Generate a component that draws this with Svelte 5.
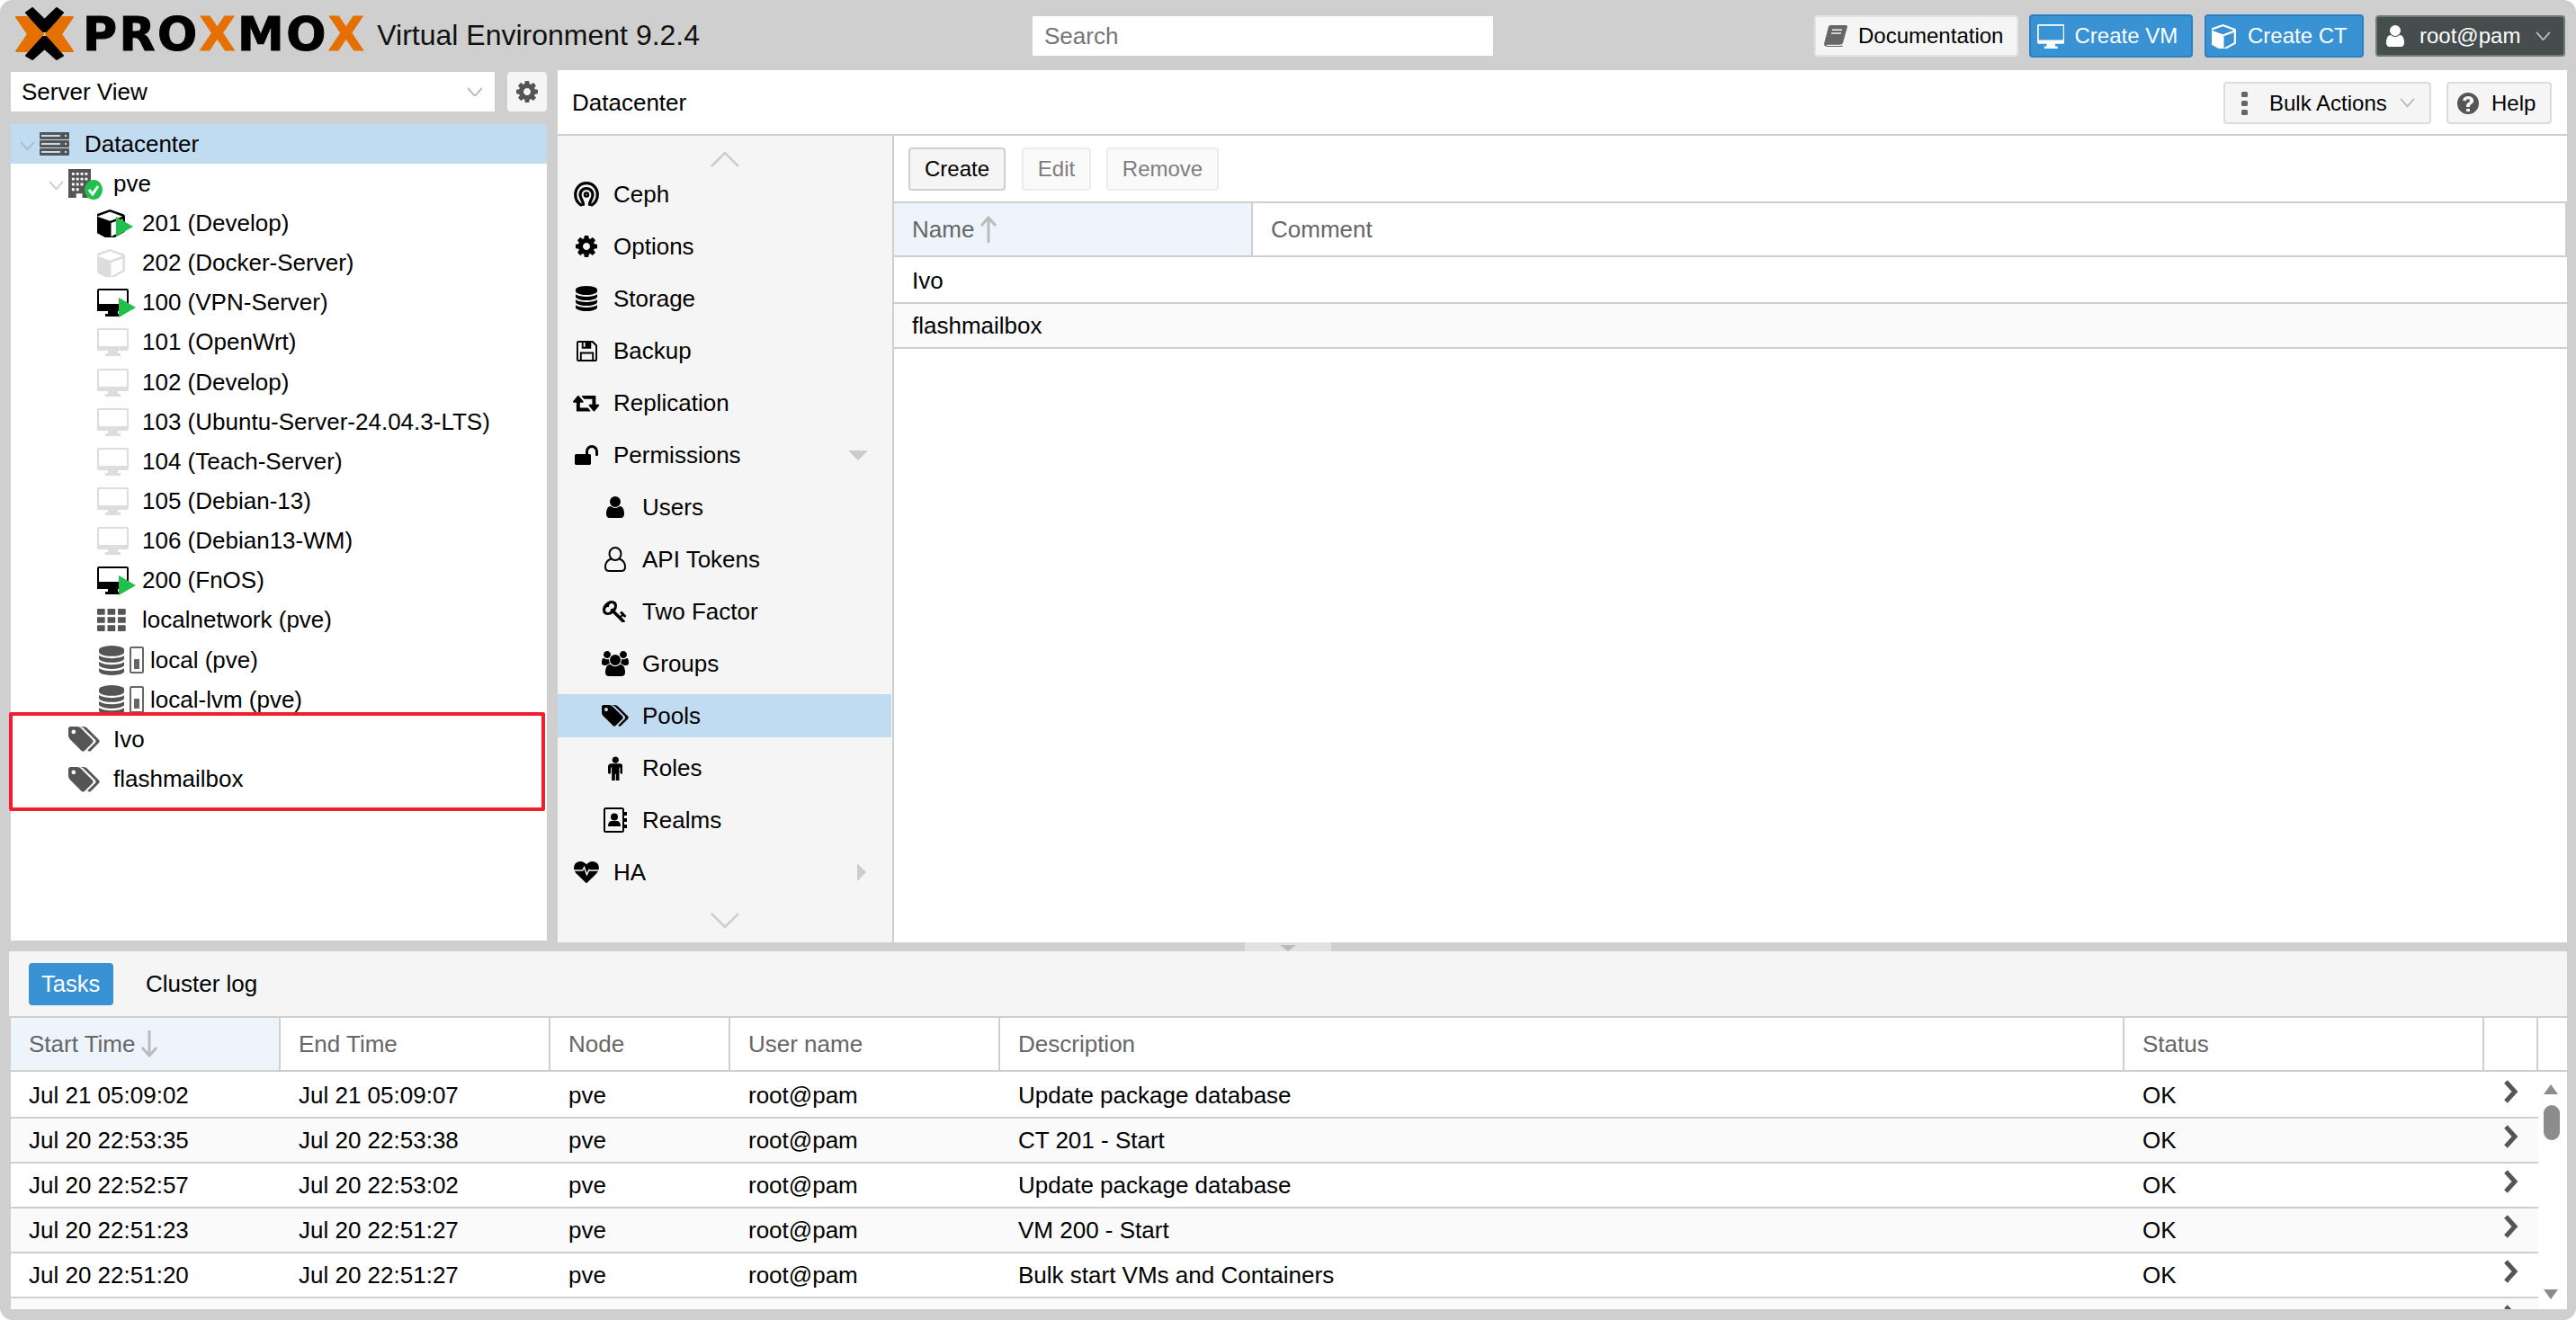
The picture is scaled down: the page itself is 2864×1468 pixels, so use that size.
<script>
  // FontAwesome-like glyphs, [viewBox, path]
  const ICONS = {
    cog: ['128 128 1536 1536', 'M1152 896q0-106-75-181t-181-75-181 75-75 181 75 181 181 75 181-75 75-181zm512-109v222q0 12-8 23t-20 13l-185 28q-19 54-39 91 35 50 107 138 10 12 10 25t-9 23q-27 37-99 108t-94 71q-12 0-26-9l-138-108q-44 23-91 38-16 136-29 186-7 28-36 28h-222q-14 0-24.5-8.5t-11.5-21.5l-28-184q-49-16-90-37l-141 107q-10 9-25 9-14 0-25-11-126-114-165-168-7-10-7-23 0-12 8-23 15-21 51-66.5t54-70.5q-27-50-41-99l-183-27q-13-2-21-12.5t-8-23.5v-222q0-12 8-23t19-13l186-28q14-46 39-92-40-57-107-138-10-12-10-24 0-10 9-23 26-36 98.5-107.5t94.5-71.5q13 0 26 10l138 107q44-23 91-38 16-136 29-186 7-28 36-28h222q14 0 24.5 8.5t11.5 21.5l28 184q49 16 90 37l142-107q9-9 24-9 13 0 25 10 129 119 165 170 7 8 7 22 0 12-8 23-15 21-51 66.5t-54 70.5q26 50 41 98l183 28q13 2 21 12.5t8 23.5z'],
    database: ['128 0 1536 1792', 'M896 768q237 0 443-43t325-127v170q0 69-103 128t-280 93.5-385 34.5-385-34.5-280-93.5-103-128v-170q119 84 325 127t443 43zm0 768q237 0 443-43t325-127v170q0 69-103 128t-280 93.5-385 34.5-385-34.5-280-93.5-103-128v-170q119 84 325 127t443 43zm0-384q237 0 443-43t325-127v170q0 69-103 128t-280 93.5-385 34.5-385-34.5-280-93.5-103-128v-170q119 84 325 127t443 43zm0-1152q208 0 385 34.5t280 93.5 103 128v128q0 69-103 128t-280 93.5-385 34.5-385-34.5-280-93.5-103-128v-128q0-69 103-128t280-93.5 385-34.5z'],
    user: ['256 128 1280 1536', 'M1536 1399q0 109-62.500 187t-150.500 78h-854q-88 0-150.500-78t-62.500-187q0-85 8.500-160.500t31.500-152 58.500-131 94-89 134.500-34.500q131 128 313 128t313-128q76 0 134.500 34.500t94 89 58.500 131 31.500 152 8.500 160.500zm-256-887q0 159-112.500 271.500t-271.500 112.500-271.500-112.500-112.500-271.500 112.500-271.500 271.500-112.500 271.500 112.500 112.500 271.500z'],
    tags: ['0 128 1984 1536', 'M448 448q0-53-37.500-90.500t-90.500-37.500-90.500 37.500-37.500 90.500 37.500 90.500 90.500 37.500 90.500-37.500 37.500-90.500zm1067 576q0 53-37 90l-491 492q-39 37-91 37-53 0-90-37l-715-716q-38-37-64.500-101t-26.500-117v-416q0-52 38-90t90-38h416q53 0 117 26.500t102 64.500l715 714q37 39 37 91zm384 0q0 53-37 90l-491 492q-39 37-91 37-36 0-59-14t-53-45l470-470q37-37 37-90 0-52-37-91l-715-714q-38-38-102-64.500t-117-26.500h224q53 0 117 26.500t102 64.500l715 714q37 39 37 91z'],
    unlock: ['0 128 1664 1408', 'M1664 576v256q0 26-19 45t-45 19h-64q-26 0-45-19t-19-45v-256q0-106-75-181t-181-75-181 75-75 181v192h96q40 0 68 28t28 68v576q0 40-28 68t-68 28h-960q-40 0-68-28t-28-68v-576q0-40 28-68t68-28h672v-192q0-185 131.500-316.500t316.500-131.500 316.500 131.500 131.500 316.500z'],
    retweet: ['0 256 1920 1280', 'M1280 1504q0 13-9.500 22.500t-22.500 9.500h-960q-8 0-13.500-2t-9-7-5.500-8-3-11.500-1-11.500v-600h-192q-26 0-45-19t-19-45q0-24 15-41l320-384q19-22 49-22t49 22l320 384q15 17 15 41 0 26-19 45t-45 19h-192v384h576q16 0 25 11l160 192q7 10 7 21zm640-416q0 24-15 41l-320 384q-20 23-49 23t-49-23l-320-384q-15-17-15-41 0-26 19-45t45-19h192v-384h-576q-16 0-25-12l-160-192q-7-9-7-20 0-13 9.500-22.500t22.500-9.500h960q8 0 13.500 2t9 7 5.500 8 3 11.500 1 11.500v600h192q26 0 45 19t19 45z'],
    key: ['0 128 1792 1536', 'M832 512q0-80-56-136t-136-56-136 56-56 136q0 42 19 83-41-19-83-19-80 0-136 56t-56 136 56 136 136 56 136-56 56-136q0-42-19-83 41 19 83 19 80 0 136-56t56-136zm851 704q0 17-49 66t-66 49q-9 0-28.500-16t-36.500-33-38.500-40-24.500-26l-96 96 220 220q28 28 28 68 0 42-39 81t-81 39q-40 0-68-28l-671-671q-176 131-365 131-163 0-265.500-102.500t-102.500-265.500q0-160 95-313t248-248 313-95q163 0 265.500 102.500t102.500 265.500q0 189-131 365l355 355 96-96q-3-3-26-24.500t-40-38.500-33-36.500-16-28.500q0-17 49-66t66-49q13 0 23 10 6 6 46 44.500t82 79.500 86.500 86 73 78 28.500 41z'],
    users: ['0 0 1920 1792', 'M593 896q-162 5-265 128h-134q-82 0-138-40.500t-56-118.500q0-353 124-353 6 0 43.500 21t97.500 42.500 119 21.500q67 0 133-23-5 37-5 66 0 139 81 256zm1071 637q0 120-73 189.500t-194 69.500h-874q-121 0-194-69.500t-73-189.500q0-53 3.500-103.500t14-109 26.500-108.500 43-97.500 62-81 85.500-53.500 111.500-20q10 0 43 21.500t73 48 107 48 135 21.500 135-21.500 107-48 73-48 43-21.500q61 0 111.500 20t85.500 53.500 62 81 43 97.500 26.500 108.500 14 109 3.500 103.500zm-1024-1277q0 106-75 181t-181 75-181-75-75-181 75-181 181-75 181 75 75 181zm704 384q0 159-112.500 271.500t-271.500 112.500-271.500-112.500-112.500-271.500 112.500-271.500 271.500-112.500 271.500 112.500 112.500 271.500zm576 225q0 78-56 118.500t-138 40.500h-134q-103-123-265-128 81-117 81-256 0-29-5-66 66 23 133 23 59 0 119-21.500t97.500-42.500 43.500-21q124 0 124 353zm-128-609q0 106-75 181t-181 75-181-75-75-181 75-181 181-75 181 75 75 181z'],
    male: ['0 128 1024 1664', 'M1024 832v416q0 40-28 68t-68 28-68-28-28-68v-352h-64v912q0 46-33 79t-79 33-79-33-33-79v-464h-64v464q0 46-33 79t-79 33-79-33-33-79v-912h-64v352q0 40-28 68t-68 28-68-28-28-68v-416q0-80 56-136t136-56h640q80 0 136 56t56 136zm-288-448q0 93-65.500 158.500t-158.500 65.500-158.500-65.500-65.500-158.500 65.500-158.500 158.500-65.500 158.500 65.500 65.500 158.500z'],
    heart: ['0 128 1792 1536', 'M896 1664q-26 0-44-18l-624-602q-10-8-27.500-26t-55.500-65.500-68-97.500-53.500-121-23.500-138q0-220 127-344t351-124q62 0 126.500 21.500t120 58 95.500 68.500 76 68q36-36 76-68t95.500-68.500 120-58 126.500-21.500q224 0 351 124t127 344q0 221-229 450l-623 600q-18 18-44 18z'],
    cube: ['128 128 1536 1536', 'M896 1629l640-349v-636l-640 233v752zm-64-865l698-254-698-254-698 254zm832-252v768q0 35-18 65t-49 47l-704 384q-28 16-61 16t-61-16l-704-384q-31-17-49-47t-18-65v-768q0-40 23-73t61-47l704-256q22-8 44-8t44 8l704 256q38 14 61 47t23 73z'],
    desktop: ['0 0 35 31', 'M2 0h31a2 2 0 0 1 2 2v21a2 2 0 0 1-2 2H23v3h3v3H9v-3h3v-3H2a2 2 0 0 1-2-2V2a2 2 0 0 1 2-2zm0 2v18h31V2z'],
    server: ['0 0 33 26', 'M1 0h31a1 1 0 0 1 1 1v6a1 1 0 0 1-1 1H1a1 1 0 0 1-1-1V1a1 1 0 0 1 1-1zm1 3v2h21V3zm26 0v2h2V3zM1 9h31a1 1 0 0 1 1 1v6a1 1 0 0 1-1 1H1a1 1 0 0 1-1-1v-6a1 1 0 0 1 1-1zm1 3v2h21v-2zm26 0v2h2v-2zM1 18h31a1 1 0 0 1 1 1v6a1 1 0 0 1-1 1H1a1 1 0 0 1-1-1v-6a1 1 0 0 1 1-1zm1 3v2h21v-2zm26 0v2h2v-2z'],
    building: ['0 0 26 33', 'M0 0h26v33H0zM4 4v3h3V4zm5 0v3h3V4zm5 0v3h3V4zm5 0v3h3V4zM4 10v3h3v-3zm5 0v3h3v-3zm5 0v3h3v-3zm5 0v3h3v-3zM4 16v3h3v-3zm5 0v3h3v-3zm5 0v3h3v-3zM4 22v3h3v-3zm5 0v3h3v-3zM9 28v5h7v-5z'],
    grid: ['0 0 33 26', 'M1 0h8v7H1a1 1 0 0 1-1-1V1a1 1 0 0 1 1-1zm11 0h9v7h-9zm12 0h8a1 1 0 0 1 1 1v5a1 1 0 0 1-1 1h-8zM0 9.500h9v7H0zm12 0h9v7h-9zm12 0h9v7h-9zM1 19h8v7H1a1 1 0 0 1-1-1v-5a1 1 0 0 1 1-1zm11 0h9v7h-9zm12 0h8a1 1 0 0 1 1 1v5a1 1 0 0 1-1 1h-8z'],
    floppy: ['0 0 24 24', 'M2 0h17l5 5v17a2 2 0 0 1-2 2H2a2 2 0 0 1-2-2V2a2 2 0 0 1 2-2zm0 2v20h2v-9h16v9h2V6l-4-4h-1v7H6V2zm6 0v5h2V2zm-2 13v7h12v-7z'],
    help: ['0 0 24 24', 'M12 0a12 12 0 1 1 0 24 12 12 0 0 1 0-24zm-2 18v3h4v-3zM12 4C8.500 4 6.500 6 6 8.500l3.500 1c.3-1.500 1.200-2.200 2.500-2.200 1.200 0 2 .7 2 1.600 0 1-.8 1.500-1.800 2.200-1.500 1-2.200 2-2.200 4v1h4v-.8c0-1 .5-1.500 1.500-2.200 1.500-1 2.700-2.200 2.700-4.300C18 6 15.500 4 12 4z']
  };

  const tree = [
    { depth: 0, icon: 'dc', text: 'Datacenter', exp: true, sel: true },
    { depth: 1, icon: 'node', text: 'pve', exp: true },
    { depth: 2, icon: 'ct-run', text: '201 (Develop)' },
    { depth: 2, icon: 'ct-off', text: '202 (Docker-Server)' },
    { depth: 2, icon: 'vm-run', text: '100 (VPN-Server)' },
    { depth: 2, icon: 'vm-off', text: '101 (OpenWrt)' },
    { depth: 2, icon: 'vm-off', text: '102 (Develop)' },
    { depth: 2, icon: 'vm-off', text: '103 (Ubuntu-Server-24.04.3-LTS)' },
    { depth: 2, icon: 'vm-off', text: '104 (Teach-Server)' },
    { depth: 2, icon: 'vm-off', text: '105 (Debian-13)' },
    { depth: 2, icon: 'vm-off', text: '106 (Debian13-WM)' },
    { depth: 2, icon: 'vm-run', text: '200 (FnOS)' },
    { depth: 2, icon: 'net', text: 'localnetwork (pve)' },
    { depth: 2, icon: 'store', text: 'local (pve)' },
    { depth: 2, icon: 'store', text: 'local-lvm (pve)' }
  ];
  const pools = ['Ivo', 'flashmailbox'];

  const nav = [
    { icon: 'ceph', text: 'Ceph' },
    { icon: 'cog', text: 'Options' },
    { icon: 'database', text: 'Storage' },
    { icon: 'floppy', text: 'Backup' },
    { icon: 'retweet', text: 'Replication' },
    { icon: 'unlock', text: 'Permissions', arrow: 'down' },
    { icon: 'user', text: 'Users', sub: true },
    { icon: 'usero', text: 'API Tokens', sub: true },
    { icon: 'key', text: 'Two Factor', sub: true },
    { icon: 'users', text: 'Groups', sub: true },
    { icon: 'tags', text: 'Pools', sub: true, sel: true },
    { icon: 'male', text: 'Roles', sub: true },
    { icon: 'realm', text: 'Realms', sub: true },
    { icon: 'ha', text: 'HA', arrow: 'right' }
  ];
  const navSize = { cog: 24, database: 28, floppy: 23, retweet: 19.5, unlock: 22, user: 24, key: 24, users: 28, tags: 24, male: 27 };

  const taskCols = ['Start Time', 'End Time', 'Node', 'User name', 'Description', 'Status', ''];
  const tasks = [
    ['Jul 21 05:09:02', 'Jul 21 05:09:07', 'pve', 'root@pam', 'Update package database', 'OK'],
    ['Jul 20 22:53:35', 'Jul 20 22:53:38', 'pve', 'root@pam', 'CT 201 - Start', 'OK'],
    ['Jul 20 22:52:57', 'Jul 20 22:53:02', 'pve', 'root@pam', 'Update package database', 'OK'],
    ['Jul 20 22:51:23', 'Jul 20 22:51:27', 'pve', 'root@pam', 'VM 200 - Start', 'OK'],
    ['Jul 20 22:51:20', 'Jul 20 22:51:27', 'pve', 'root@pam', 'Bulk start VMs and Containers', 'OK'],
    ['', '', '', '', '', '']
  ];

  const dims = (name, h) => {
    const [, , vw, vh] = ICONS[name][0].split(' ').map(Number);
    return { width: (h * vw) / vh, height: h };
  };
</script>

{#snippet ico(name, h)}
  <svg class="ic" {...dims(name, h)} viewBox={ICONS[name][0]} fill="currentColor" fill-rule="evenodd"><path d={ICONS[name][1]} /></svg>
{/snippet}

{#snippet chev(w = 18)}
  <svg class="chev" width={w} height={w * 0.6} viewBox="0 0 18 11" fill="none" stroke="currentColor" stroke-width="2"><path d="M1 1l8 9 8-9" /></svg>
{/snippet}

{#snippet play()}
  <svg class="play" width="19" height="22" viewBox="0 0 19 22"><path d="M0 0l19 11L0 22z" fill="#21bf4b" /></svg>
{/snippet}

{#snippet navIcon(name)}
  {#if name === 'ceph'}
    <svg class="ic" width="28" height="28" viewBox="0 0 28 28" fill="none" stroke="currentColor" stroke-width="3.200" stroke-linecap="round"><path d="M8 26C4 23.500 1.700 19.500 1.700 14.500 1.700 7 7 1.700 14 1.700s12.300 5.300 12.300 12.800c0 5-2.300 9-6.300 11.500" /><path d="M10.500 25.500C10.500 21 7 19 7 14.500 7 10.500 10 7.500 14 7.500s7 3 7 7c0 4.500-3.500 6.500-3.500 11" /><circle cx="14" cy="14.500" r="2" stroke-width="2.500" /></svg>
  {:else if name === 'usero'}
    <svg class="ic" width="24" height="28" viewBox="0 0 24 28" fill="none" stroke="currentColor" stroke-width="2"><ellipse cx="12" cy="8" rx="6.500" ry="7" /><path d="M7.500 13.500C3 15 1 18 1 22.500 1 25.500 3 27 5.500 27h13c2.500 0 4.500-1.500 4.500-4.500 0-4.500-2-7.500-6.500-9" /></svg>
  {:else if name === 'realm'}
    <svg class="ic" width="26" height="28" viewBox="0 0 26 28"><rect x="1" y="1" width="21" height="26" rx="1.500" fill="none" stroke="currentColor" stroke-width="2" /><path d="M23 5h3v4h-3zM23 12h3v4h-3zM23 19h3v4h-3z" fill="currentColor" /><circle cx="12" cy="10.500" r="4" fill="currentColor" /><path d="M5 21c0-4 2-6 4-6h6c2 0 4 2 4 6z" fill="currentColor" /></svg>
  {:else if name === 'ha'}
    <svg class="ic" width="28" height="24" viewBox="0 0 1792 1536"><path transform="translate(0 -128)" d={ICONS.heart[1]} fill="currentColor" /><path d="M0 640h620l120-220 180 520 170-340 60 40h640" fill="none" stroke="#f5f5f5" stroke-width="90" /></svg>
  {:else}
    {@render ico(name, navSize[name])}
  {/if}
{/snippet}

{#snippet treeIcon(kind)}
  {#if kind === 'dc'}
    <span class="gray">{@render ico('server', 26)}</span>
  {:else if kind === 'node'}
    <span class="stack">
      <span class="gray">{@render ico('building', 32)}</span>
      <svg class="badge" width="20" height="22" viewBox="0 0 20 22"><ellipse cx="10" cy="11" rx="10" ry="11" fill="#21bf4b" /><path d="M5 11l4 5 6-9" fill="none" stroke="#fff" stroke-width="3" /></svg>
    </span>
  {:else if kind === 'ct-run'}
    <span class="stack ct">{@render ico('cube', 31)}{@render play()}</span>
  {:else if kind === 'ct-off'}
    <span class="off">{@render ico('cube', 31)}</span>
  {:else if kind === 'vm-run'}
    <span class="stack vm">{@render ico('desktop', 31)}<i class="blob"></i>{@render play()}</span>
  {:else if kind === 'vm-off'}
    <span class="off">{@render ico('desktop', 31)}</span>
  {:else if kind === 'net'}
    <span class="gray">{@render ico('grid', 25)}</span>
  {:else}
    <span class="gray db">{@render ico('database', 33)}</span>
    <span class="usage"><i></i></span>
  {/if}
{/snippet}

<div class="app">
  <header class="topbar">
    <div class="brand">
      <svg class="mark" width="68" height="60" viewBox="16 8 68 60">
        <g fill="#000" stroke="#000" stroke-width="2" stroke-linejoin="round">
          <path d="M29 14l7-5 13.500 13L63 9l7 5-18 21h-5z" />
          <path d="M29 62l7 4 13.500-12L63 66l7-4-18-21h-5z" />
        </g>
        <g fill="#e57000" stroke="#e57000" stroke-width="2" stroke-linejoin="round">
          <path d="M18 19h12l18 19-18 19H18l13-19z" />
          <path d="M81 19H69L51 38l18 19h12L68 38z" />
        </g>
      </svg>
      <span class="word">PRO<b>X</b>MO<b>X</b></span>
      <span class="title">Virtual Environment 9.2.4</span>
    </div>
    <div class="search">Search</div>
    <div class="top-actions">
      <div class="tbtn doc">
        <svg class="ic" width="26" height="24" viewBox="0 0 26 32" preserveAspectRatio="none" fill="#666"><path d="M7 0h18l1 2-5 24c-.5 2-2 3-4 3H5c-2 0-3 1-3 1 0 .5 1 .5 2 .5h15l1-1 1 1c-.5 1-1.500 1.500-3 1.500H4c-2.500 0-4-1.500-4-4 0-1 .2-2 .5-3L5 2c.3-1 1-2 2-2zm2 6v2h11V6zm-1 5v2h11v-2z" fill-rule="evenodd" /></svg>
        Documentation
      </div>
      <div class="tbtn blue vm-btn">{@render ico('desktop', 27)}Create VM</div>
      <div class="tbtn blue ct-btn">{@render ico('cube', 27)}Create CT</div>
      <div class="tbtn dark">{@render ico('user', 24)}<span>root@pam</span><span class="dim">{@render chev(17)}</span></div>
    </div>
  </header>

  <div class="middle">
    <aside class="left">
      <div class="combo-row">
        <div class="combo"><span>Server View</span><span class="dim">{@render chev()}</span></div>
        <div class="gear">{@render ico('cog', 24)}</div>
      </div>
      <div class="tree">
        {#each tree as row}
          <div class="tree-row d{row.depth}" class:sel={row.sel}>
            <span class="exp">{#if row.exp}{@render chev(17)}{/if}</span>
            <span class="tree-ic" class:wide={row.icon === 'store'}>{@render treeIcon(row.icon)}</span>
            <span>{row.text}</span>
          </div>
        {/each}
        <div class="marked">
          {#each pools as p}
            <div class="tree-row pool">
              <span class="tree-ic gray">{@render ico('tags', 28)}</span>
              <span>{p}</span>
            </div>
          {/each}
        </div>
      </div>
    </aside>

    <main class="panel">
      <div class="panel-head">
        <span>Datacenter</span>
        <div class="head-actions">
          <div class="btn bulk">
            <svg width="8" height="26" viewBox="0 0 8 26" fill="#666"><rect width="7" height="6" x="0" y="0" rx="1.500" /><rect width="7" height="6" x="0" y="10" rx="1.500" /><rect width="7" height="6" x="0" y="20" rx="1.500" /></svg>
            <span>Bulk Actions</span>
            <span class="dim">{@render chev(17)}</span>
          </div>
          <div class="btn help"><span class="gray">{@render ico('help', 24)}</span><span>Help</span></div>
        </div>
      </div>
      <div class="panel-body">
        <nav class="menu">
          <div class="scroll-cap"><svg width="32" height="18" viewBox="0 0 32 18" fill="none" stroke="#ccc" stroke-width="2.500"><path d="M1 17L16 2l15 15" /></svg></div>
          {#each nav as item}
            <div class="menu-item" class:sub={item.sub} class:sel={item.sel}>
              <span class="menu-ic">{@render navIcon(item.icon)}</span>
              <span>{item.text}</span>
              {#if item.arrow === 'down'}<i class="arrow-down"></i>{/if}
              {#if item.arrow === 'right'}<i class="arrow-right"></i>{/if}
            </div>
          {/each}
          <div class="scroll-cap low"><svg width="32" height="18" viewBox="0 0 32 18" fill="none" stroke="#ccc" stroke-width="2.500"><path d="M1 1l15 15L31 1" /></svg></div>
        </nav>
        <section class="content">
          <div class="toolbar">
            <div class="btn create">Create</div>
            <div class="btn off-btn edit">Edit</div>
            <div class="btn off-btn remove">Remove</div>
          </div>
          <div class="pool-head">
            <div class="th sorted">Name
              <svg width="20" height="30" viewBox="0 0 20 30" fill="none" stroke="#bbb" stroke-width="3"><path d="M10 30V3M2 11l8-9 8 9" /></svg>
            </div>
            <div class="th">Comment</div>
          </div>
          <div class="pool-rows">
            {#each pools as p, i}
              <div class="pool-row" class:alt={i % 2 === 1}>{p}</div>
            {/each}
          </div>
        </section>
      </div>
    </main>
  </div>

  <div class="splitter"><div class="grip"><i></i></div></div>

  <section class="log">
    <div class="log-tools">
      <div class="tab active">Tasks</div>
      <div class="tab">Cluster log</div>
    </div>
    <div class="task-grid">
      <div class="task-cols task-head">
        {#each taskCols as c, i}
          <div class="th" class:sorted={i === 0}>{c}
            {#if i === 0}
              <svg width="20" height="30" viewBox="0 0 20 30" fill="none" stroke="#bbb" stroke-width="3"><path d="M10 0v27M2 19l8 9 8-9" /></svg>
            {/if}
          </div>
        {/each}
      </div>
      <div class="task-body">
        {#each tasks as t, i}
          <div class="task-cols task-row" class:alt={i % 2 === 1}>
            {#each t as v}<div class="td">{v}</div>{/each}
            <div class="td go"><svg width="17" height="26" viewBox="0 0 17 26" fill="none" stroke="#555" stroke-width="5"><path d="M3 2l10 11L3 24" /></svg></div>
          </div>
        {/each}
        <div class="scrollbar">
          <i class="sb-up"></i>
          <i class="sb-thumb"></i>
          <i class="sb-down"></i>
        </div>
      </div>
    </div>
  </section>
</div>

<style>
  :global(body) { margin: 0; background: #fff; }

  .app {
    width: 2864px;
    height: 1468px;
    background: #cfcfcf;
    border-radius: 14px;
    overflow: hidden;
    font-family: "Liberation Sans", Arial, sans-serif;
    font-size: 26px;
    color: #000;
    display: flex;
    flex-direction: column;
  }

  .ic { display: block; flex: none; }
  .gray { color: #555; display: block; }
  .dim { color: #bbb; display: flex; }
  .chev { display: block; }

  /* --- top bar --- */

  .topbar {
    height: 78px;
    flex: none;
    box-sizing: border-box;
    display: flex;
    align-items: center;
    padding: 2px 12px 0 16px;
  }

  .brand {
    width: 1132px;
    flex: none;
    display: flex;
    align-items: center;
  }

  .mark { margin-top: -4px; }

  .word {
    margin-left: 8px;
    font-family: "DejaVu Sans", sans-serif;
    font-weight: 700;
    font-size: 52px;
    letter-spacing: 2.400px;
    line-height: 60px;
    margin-top: -4px;
    -webkit-text-stroke: 1px currentColor;
  }

  .word b { color: #e57000; }

  .title {
    margin-left: 12px;
    font-size: 32px;
    color: #111;
    margin-top: -1px;
  }

  .search {
    width: 512px;
    height: 44px;
    box-sizing: border-box;
    background: #fff;
    color: #757575;
    line-height: 44px;
    padding-left: 13px;
    flex: none;
  }

  .top-actions {
    margin-left: auto;
    display: flex;
    align-items: center;
    gap: 13px;
  }

  .tbtn {
    height: 46px;
    box-sizing: border-box;
    display: flex;
    align-items: center;
    font-size: 24px;
    border-radius: 4px;
    border: 2px solid transparent;
  }

  .doc {
    width: 227px;
    padding-left: 9px;
    gap: 12px;
    background: #f5f5f5;
    border-color: #e4e4e4;
    margin-right: -1px;
  }

  .blue {
    height: 48px;
    background: #3892d4;
    border-color: #2a7fc4;
    color: #fff;
  }

  .vm-btn { width: 182px; padding-left: 7px; gap: 11px; }
  .ct-btn { width: 177px; padding-left: 6px; gap: 13px; }

  .dark {
    width: 211px;
    padding-left: 10px;
    gap: 17px;
    background: #464d4d;
    border-color: #6d7a7a;
    color: #fff;
  }

  /* --- middle --- */

  .middle {
    height: 970px;
    flex: none;
    display: flex;
    gap: 12px;
    padding: 0 10px 0 12px;
  }

  .left {
    width: 596px;
    flex: none;
    display: flex;
    flex-direction: column;
    padding-top: 2px;
    gap: 14px;
    padding-bottom: 2px;
    box-sizing: border-box;
  }

  .combo-row {
    display: flex;
    height: 44px;
    gap: 14px;
    flex: none;
  }

  .combo {
    flex: 1;
    background: #fff;
    display: flex;
    align-items: center;
    justify-content: space-between;
    padding: 0 13px 0 12px;
  }

  .gear {
    width: 44px;
    flex: none;
    background: #f5f5f5;
    border-radius: 4px;
    color: #555;
    display: flex;
    align-items: center;
    justify-content: center;
  }

  .tree {
    flex: 1;
    background: #fff;
  }

  .tree-row {
    height: 44.17px;
    display: flex;
    align-items: center;
    box-sizing: border-box;
  }

  .tree-row.sel { background: #c1dbf0; }
  .tree-row.sel .exp { color: #a8bccc; }
  .d0 { padding-left: 10px; }
  .d1 { padding-left: 42px; }
  .d2 { padding-left: 74px; }
  .pool { padding-left: 62px; }

  .exp {
    width: 22px;
    flex: none;
    color: #ccc;
    display: flex;
    margin-top: 4px;
  }

  .tree-ic {
    width: 50px;
    flex: none;
    display: flex;
    align-items: center;
    gap: 6px;
  }

  .tree-ic.wide { width: 59px; }

  .stack { position: relative; display: block; }
  .play { position: absolute; left: 21px; top: 8px; }
  .vm .play { left: 24px; top: 10px; }
  .badge { position: absolute; left: 18px; top: 12px; }

  .off { color: #ddd; display: block; }

  .blob {
    position: absolute;
    left: 0;
    top: 17px;
    width: 24px;
    height: 8px;
    background: #000;
  }

  .db { margin-left: 2px; }

  .usage {
    width: 16px;
    height: 30px;
    box-sizing: border-box;
    border: 2px solid #666;
    border-radius: 2px;
    display: flex;
    align-items: flex-end;
    padding: 3px 3px;
  }

  .usage i { display: block; width: 100%; height: 11px; background: #666; }

  .marked {
    position: relative;
    margin: -8.500px 2px 0 -2px;
    padding-top: 4.500px;
    background: #fff;
    border: 4px solid #f01f2d;
    border-radius: 2px;
    height: 110px;
    box-sizing: border-box;
  }

  /* --- main panel --- */

  .panel {
    flex: 1;
    background: #fff;
    display: flex;
    flex-direction: column;
    min-width: 0;
  }

  .panel-head {
    height: 73px;
    flex: none;
    box-sizing: border-box;
    border-bottom: 2px solid #cfcfcf;
    display: flex;
    align-items: center;
    justify-content: space-between;
    padding: 2px 17px 0 16px;
  }

  .head-actions { display: flex; gap: 17px; }

  .btn {
    height: 47px;
    box-sizing: border-box;
    background: #f5f5f5;
    border: 2px solid #dcdcdc;
    border-radius: 4px;
    display: flex;
    align-items: center;
    font-size: 24px;
  }

  .bulk { width: 231px; padding-left: 18px; gap: 23px; }
  .bulk .dim { margin-left: -9px; }
  .help { width: 117px; padding-left: 10px; gap: 14px; }

  .panel-body { flex: 1; display: flex; min-height: 0; }

  .menu {
    width: 372px;
    flex: none;
    background: #f5f5f5;
    border-right: 2px solid #cfcfcf;
    overflow: hidden;
  }

  .scroll-cap {
    height: 41px;
    display: flex;
    align-items: center;
    justify-content: center;
    padding-top: 10px;
    box-sizing: border-box;
  }

  .scroll-cap.low { padding: 0; height: 40px; }

  .menu-item {
    height: 48px;
    margin-bottom: 10px;
    margin-right: 1px;
    display: flex;
    align-items: center;
    padding-left: 16px;
  }

  .menu-item.sub { padding-left: 48px; }
  .menu-item.sel { background: #c1dbf0; }

  .menu-ic {
    width: 32px;
    margin-right: 14px;
    flex: none;
    display: flex;
    justify-content: center;
  }

  .arrow-down {
    margin-left: auto;
    margin-right: 26px;
    border: 11px solid transparent;
    border-top: 11px solid #ccc;
    border-bottom: 0;
  }

  .arrow-right {
    margin-left: auto;
    margin-right: 28px;
    border: 10px solid transparent;
    border-left: 10px solid #ccc;
    border-right: 0;
  }

  .content { flex: 1; min-width: 0; }

  .toolbar {
    height: 75px;
    box-sizing: border-box;
    display: flex;
    gap: 18px;
    padding: 13px 0 0 16px;
    border-bottom: 2px solid #cfcfcf;
  }

  .toolbar .btn { height: 48px; justify-content: center; }
  .create { width: 108px; border-color: #cfcfcf; }
  .off-btn { background: #fafafa; border-color: #ececec; color: #7d7d7d; }
  .edit { width: 77px; }
  .remove { width: 125px; margin-left: -1px; }

  .pool-head {
    display: grid;
    grid-template-columns: 399px 1fr;
    height: 60px;
    box-sizing: border-box;
    border-bottom: 2px solid #cfcfcf;
  }

  .th {
    color: #666;
    display: flex;
    align-items: center;
    gap: 6px;
    padding-left: 20px;
    box-sizing: border-box;
    border-right: 2px solid #cfcfcf;
    min-width: 0;
  }

  .th.sorted { background: #edf4fb; }

  .pool-rows { padding-top: 2px; }

  .pool-row {
    height: 50px;
    box-sizing: border-box;
    border-bottom: 2px solid #cfcfcf;
    display: flex;
    align-items: center;
    padding-left: 20px;
  }

  .alt { background: #fafafa; }

  /* --- splitter --- */

  .splitter {
    height: 10px;
    flex: none;
    display: flex;
    justify-content: center;
  }

  .grip {
    width: 96px;
    background: #e2e2e2;
    display: flex;
    justify-content: center;
    align-items: flex-end;
  }

  .grip i {
    border: 9px solid transparent;
    border-top: 7px solid #bbb;
    border-bottom: 0;
  }

  /* --- task log --- */

  .log {
    height: 398px;
    flex: none;
    margin: 0 10px;
    display: flex;
    flex-direction: column;
  }

  .log-tools {
    height: 74px;
    flex: none;
    box-sizing: border-box;
    background: #f5f5f5;
    border-bottom: 2px solid #cfcfcf;
    display: flex;
    align-items: center;
    gap: 18px;
    padding: 0 0 0 22px;
  }

  .tab {
    height: 47px;
    line-height: 47px;
    padding: 0 18px;
    border-radius: 4px;
  }

  .tab.active {
    background: #3892d4;
    color: #fff;
    width: 94px;
    box-sizing: border-box;
    padding: 0 14px;
    font-size: 25.500px;
  }

  .task-grid {
    flex: 1;
    margin-left: 2px;
    background: #fff;
    display: flex;
    flex-direction: column;
    min-height: 0;
  }

  .task-cols {
    display: grid;
    grid-template-columns: 300px 300px 200px 300px 1250px 400px 60px;
  }

  .task-head {
    height: 60px;
    flex: none;
    box-sizing: border-box;
    border-bottom: 2px solid #cfcfcf;
  }

  .task-body {
    position: relative;
    flex: 1;
    overflow: hidden;
    padding-top: 2px;
  }

  .task-row {
    width: 2810px;
    height: 50px;
    box-sizing: border-box;
    border-bottom: 2px solid #cfcfcf;
    align-items: center;
  }

  .td { padding-left: 20px; white-space: nowrap; }
  .go { padding-left: 21px; margin-top: -2px; }

  .scrollbar {
    position: absolute;
    right: 0;
    top: 0;
    bottom: 0;
    width: 32px;
  }

  .sb-up, .sb-down, .sb-thumb { position: absolute; display: block; }

  .sb-up {
    left: 6px;
    top: 14px;
    border: 8px solid transparent;
    border-bottom: 11px solid #8c8c8c;
    border-top: 0;
  }

  .sb-down {
    left: 6px;
    top: 242px;
    border: 8px solid transparent;
    border-top: 11px solid #8c8c8c;
    border-bottom: 0;
  }

  .sb-thumb {
    left: 6px;
    top: 37px;
    width: 18px;
    height: 39px;
    border-radius: 9px;
    background: #8c8c8c;
  }
</style>
